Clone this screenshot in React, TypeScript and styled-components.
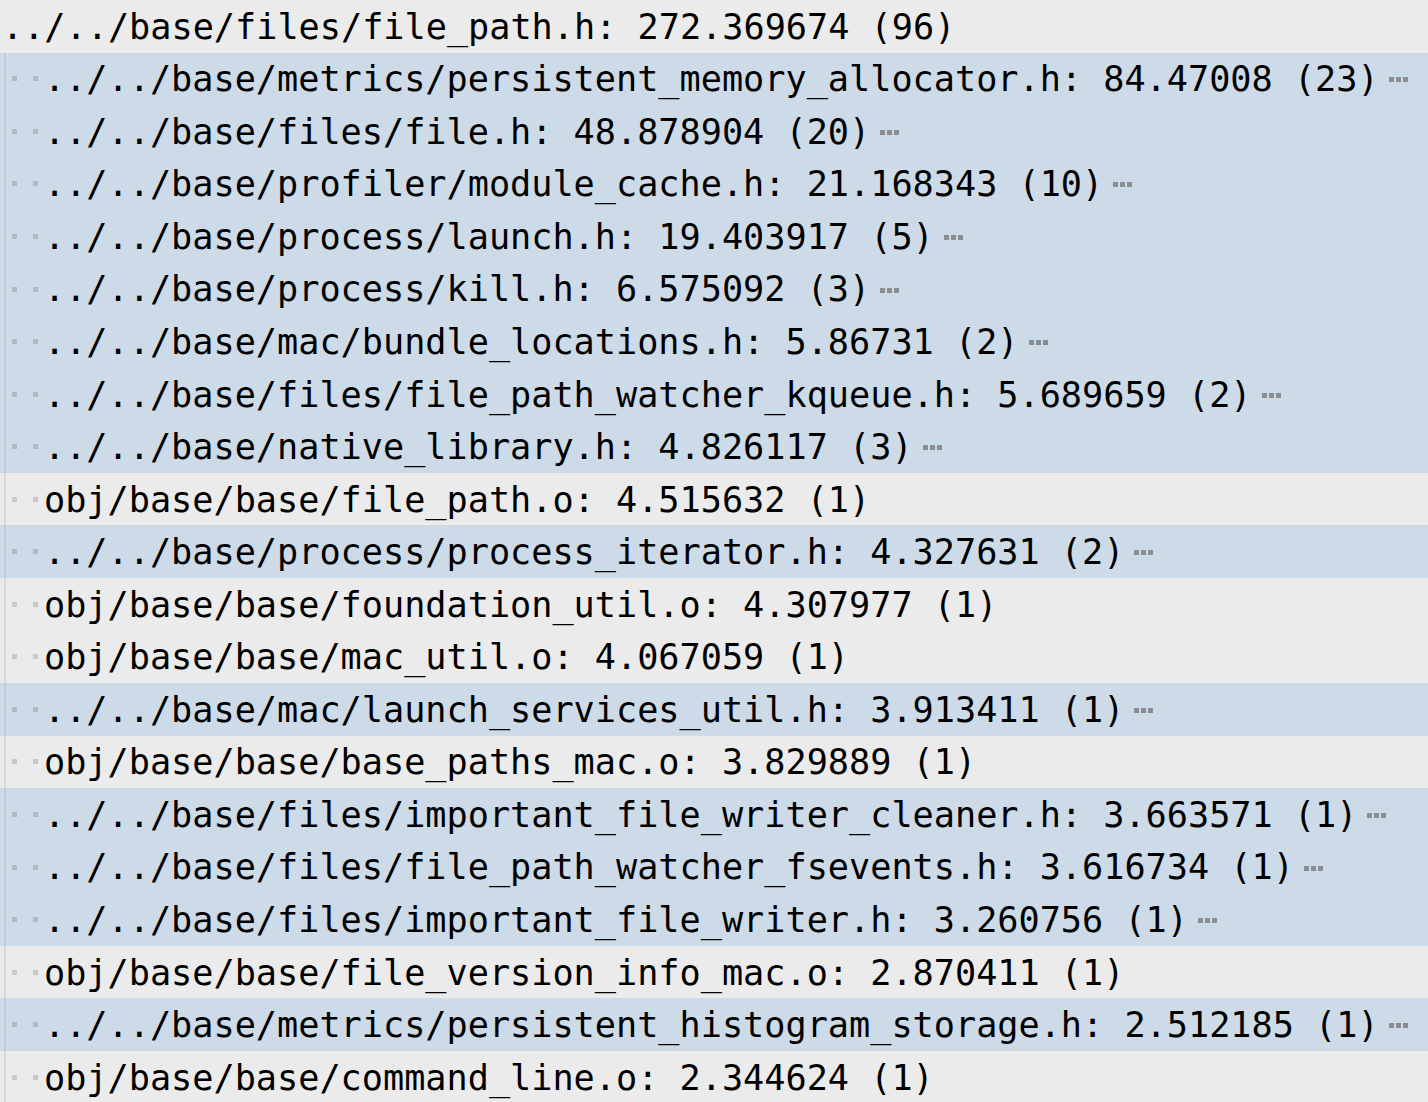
import React from "react";
import styled, { createGlobalStyle } from "styled-components";

const GlobalStyle = createGlobalStyle`
  html, body {
    margin: 0;
    padding: 0;
    background: #ebebeb;
  }
  body {
    font-family: "DejaVu Sans Mono", "Liberation Mono", monospace;
    overflow: hidden;
  }
`;

const Tree = styled.div`
  display: flex;
  flex-direction: column;
  width: 1428px;
`;

const Row = styled.div<{ $kind: "root" | "branch" | "leaf" }>`
  display: flex;
  align-items: center;
  height: 52.55px;
  padding-left: 2px;
  box-sizing: border-box;
  font-size: 35.2px;
  color: #000;
  white-space: pre;
  background: ${(p) =>
    p.$kind === "root"
      ? "#ebebeb"
      : `linear-gradient(to right, transparent 4px, rgba(0,0,0,0.07) 4px, rgba(0,0,0,0.07) 6px, transparent 6px), ${
          p.$kind === "branch" ? "#cddae7" : "#ebebeb"
        }`};
`;

const Guide = styled.span`
  display: flex;
  align-items: center;
  justify-content: center;
  width: 21px;
  height: 100%;
  padding-left: 3px;
  box-sizing: border-box;
  &::after {
    content: "";
    width: 5px;
    height: 5px;
    background: rgba(0, 0, 0, 0.15);
  }
`;

const Label = styled.span`
  display: inline-block;
  line-height: 1;
`;

const More = styled.span`
  display: inline-flex;
  gap: 2px;
  margin-left: 10px;
  margin-top: 2px;
`;

const MoreDot = styled.span`
  width: 5px;
  height: 5px;
  background: #8a8e93;
`;

type Item = { text: string; kind: "branch" | "leaf" };

const items: Item[] = [
  { text: "../../base/metrics/persistent_memory_allocator.h: 84.47008 (23)", kind: "branch" },
  { text: "../../base/files/file.h: 48.878904 (20)", kind: "branch" },
  { text: "../../base/profiler/module_cache.h: 21.168343 (10)", kind: "branch" },
  { text: "../../base/process/launch.h: 19.403917 (5)", kind: "branch" },
  { text: "../../base/process/kill.h: 6.575092 (3)", kind: "branch" },
  { text: "../../base/mac/bundle_locations.h: 5.86731 (2)", kind: "branch" },
  { text: "../../base/files/file_path_watcher_kqueue.h: 5.689659 (2)", kind: "branch" },
  { text: "../../base/native_library.h: 4.826117 (3)", kind: "branch" },
  { text: "obj/base/base/file_path.o: 4.515632 (1)", kind: "leaf" },
  { text: "../../base/process/process_iterator.h: 4.327631 (2)", kind: "branch" },
  { text: "obj/base/base/foundation_util.o: 4.307977 (1)", kind: "leaf" },
  { text: "obj/base/base/mac_util.o: 4.067059 (1)", kind: "leaf" },
  { text: "../../base/mac/launch_services_util.h: 3.913411 (1)", kind: "branch" },
  { text: "obj/base/base/base_paths_mac.o: 3.829889 (1)", kind: "leaf" },
  { text: "../../base/files/important_file_writer_cleaner.h: 3.663571 (1)", kind: "branch" },
  { text: "../../base/files/file_path_watcher_fsevents.h: 3.616734 (1)", kind: "branch" },
  { text: "../../base/files/important_file_writer.h: 3.260756 (1)", kind: "branch" },
  { text: "obj/base/base/file_version_info_mac.o: 2.870411 (1)", kind: "leaf" },
  { text: "../../base/metrics/persistent_histogram_storage.h: 2.512185 (1)", kind: "branch" },
  { text: "obj/base/base/command_line.o: 2.344624 (1)", kind: "leaf" },
];

const Ellipsis = () => (
  <More>
    <MoreDot />
    <MoreDot />
    <MoreDot />
  </More>
);

export default function App() {
  return (
    <>
      <GlobalStyle />
      <Tree>
        <Row $kind="root">
          <Label>../../base/files/file_path.h: 272.369674 (96)</Label>
        </Row>
        {items.map((it, i) => (
          <Row key={i} $kind={it.kind}>
            <Guide />
            <Guide />
            <Label>{it.text}</Label>
            {it.kind === "branch" && <Ellipsis />}
          </Row>
        ))}
      </Tree>
    </>
  );
}
